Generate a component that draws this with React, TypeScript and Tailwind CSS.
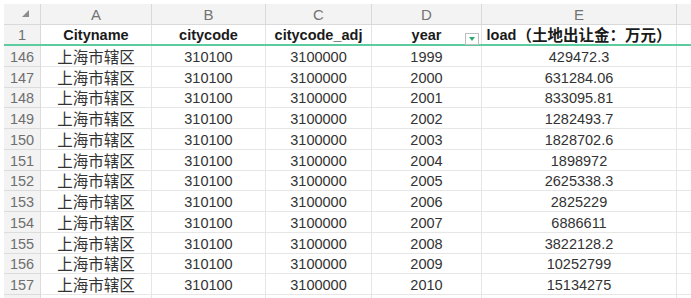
import React from "react";

const rows: [number, string, string, string, string, string][] = [
  [146, "上海市辖区", "310100", "3100000", "1999", "429472.3"],
  [147, "上海市辖区", "310100", "3100000", "2000", "631284.06"],
  [148, "上海市辖区", "310100", "3100000", "2001", "833095.81"],
  [149, "上海市辖区", "310100", "3100000", "2002", "1282493.7"],
  [150, "上海市辖区", "310100", "3100000", "2003", "1828702.6"],
  [151, "上海市辖区", "310100", "3100000", "2004", "1898972"],
  [152, "上海市辖区", "310100", "3100000", "2005", "2625338.3"],
  [153, "上海市辖区", "310100", "3100000", "2006", "2825229"],
  [154, "上海市辖区", "310100", "3100000", "2007", "6886611"],
  [155, "上海市辖区", "310100", "3100000", "2008", "3822128.2"],
  [156, "上海市辖区", "310100", "3100000", "2009", "10252799"],
  [157, "上海市辖区", "310100", "3100000", "2010", "15134275"],
];

const cols = "grid grid-cols-[37px_111px_114px_106px_110px_195px_20px]";
const font = { fontFamily: '"Liberation Sans", "Noto Sans CJK SC", sans-serif' };

export default function App() {
  const headers: React.ReactNode[] = [
    "Cityname",
    "citycode",
    "citycode_adj",
    "year",
    <>
      load<span className="text-[15.5px]">（土地出让金：万元）</span>
    </>,
    "",
  ];
  return (
    <div className="w-[691px] h-[298px] overflow-hidden bg-white pt-[4px] pl-[4px]" style={font}>
      {/* column letters */}
      <div className={`${cols} h-[21px] bg-[#f3f3f3] text-[15px] text-[#737373]`}>
        <div className="relative border-r border-b border-[#d9d9d9]">
          <svg className="absolute left-[18px] top-[6px]" width="7" height="7" viewBox="0 0 7 7">
            <polygon points="7,0 7,7 0,7" fill="#8c8c8c" />
          </svg>
        </div>
        {["A", "B", "C", "D", "E", ""].map((l, i) => (
          <div key={i} className="flex items-center justify-center border-r border-b border-[#d9d9d9] leading-none">
            {l}
          </div>
        ))}
      </div>
      {/* header row 1 */}
      <div className={`${cols} h-[21px] border-b-2 border-[#5ccba0] text-[14.5px] leading-[15px]`}>
        <div className="flex items-end justify-center bg-[#f3f3f3] border-r border-[#d9d9d9] text-[#6e6e6e] pb-[1px]">1</div>
        {headers.map((h, i) => (
          <div key={i} className="relative flex items-end justify-center border-r border-[#e3e3e3] font-bold text-[#1a1a1a] pb-[1px] whitespace-nowrap">
            {h}
            {i === 3 && (
              <div className="absolute right-[2px] top-[8px] w-[14px] h-[12px] bg-white border border-[#bdbdbd] flex items-center justify-center">
                <svg width="6" height="4" viewBox="0 0 6 4">
                  <polygon points="0,0 6,0 3,4" fill="#2fa872" />
                </svg>
              </div>
            )}
          </div>
        ))}
      </div>
      {[...rows, [158, "", "", "", "", ""] as [number, string, string, string, string, string]].map((r) => (
        <div key={r[0]} className={`${cols} h-[20.75px] text-[14.5px] leading-[15px] text-[#333333]`}>
          <div className="flex items-end justify-center bg-[#f3f3f3] border-r border-b border-[#dcdcdc] text-[#6e6e6e] pb-[1px]">
            {r[1] ? r[0] : ""}
          </div>
          {r.slice(1).map((v, i) => (
            <div
              key={i}
              className={`flex items-end justify-center border-r border-b border-[#e6e6e6] pb-[1px] whitespace-nowrap ${i === 0 ? "text-[15.5px]" : ""}`}
            >
              {v}
            </div>
          ))}
          <div className="border-b border-[#e6e6e6]" />
        </div>
      ))}
    </div>
  );
}
